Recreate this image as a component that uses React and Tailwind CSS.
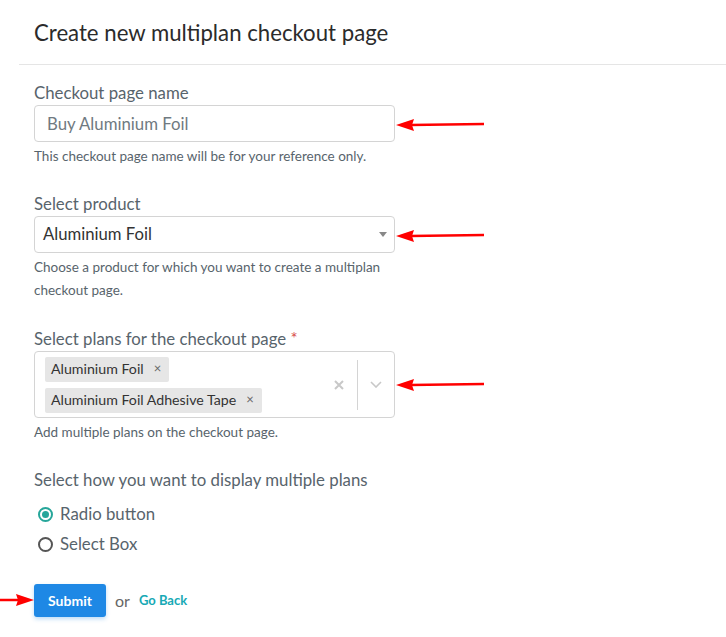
import React from "react";

const font = { fontFamily: "Lato, 'Noto Sans', sans-serif" };

function Arrow({ className }) {
  return (
    <svg className={className} viewBox="0 0 90 14" width="90" height="14">
      <line x1="14" y1="7" x2="88" y2="6" stroke="#f00" strokeWidth="2.5" />
      <polygon points="0,7 18,1 16,7 18,13" fill="#f00" />
    </svg>
  );
}

function Label({ children }) {
  return <div className="text-[16.8px] leading-[20px] text-[#58646c]">{children}</div>;
}

function Help({ children, className = "" }) {
  return <div className={`text-[13.5px] leading-[18px] text-[#58646c] ${className}`}>{children}</div>;
}

function Tag({ children }) {
  return (
    <span className="inline-flex h-[25px] items-center gap-[10px] rounded-[2px] bg-[#e6e6e6] pl-[6px] pr-[8px] text-[14.2px] text-[#333]">
      {children}
      <span className="text-[13px] text-[#666]">×</span>
    </span>
  );
}

function Radio({ checked, label }) {
  return (
    <div className="flex h-[30px] items-center gap-[7px] pl-[4px]">
      <span
        className={`flex h-[15px] w-[15px] items-center justify-center rounded-full border-2 ${
          checked ? "border-[#26a69a]" : "border-[#555]"
        }`}
      >
        {checked && <span className="h-[7px] w-[7px] rounded-full bg-[#26a69a]" />}
      </span>
      <span className="text-[16.8px] text-[#58646c]">{label}</span>
    </div>
  );
}

export default function App() {
  return (
    <div className="relative min-h-[637px] w-[726px] bg-white" style={font}>
      <div className="pl-[19px]">
        <div className="h-[65px] border-b border-[#e5e5e5] pl-[15px] pt-[19px]">
          <h1 className="text-[22.2px] leading-[28px] text-[#2b2b2b]">Create new multiplan checkout page</h1>
        </div>
      </div>

      <div className="w-[395px] pl-[34px]">
        <div className="mt-[18px]">
          <Label>Checkout page name</Label>
          <div className="mt-[2px] flex h-[37px] items-center rounded-[4px] border border-[#d4d4d4] px-[12px] text-[16.8px] text-[#707a81]">
            Buy Aluminium Foil
          </div>
          <Help className="mt-[5px]">This checkout page name will be for your reference only.</Help>
        </div>

        <div className="mt-[29px]">
          <Label>Select product</Label>
          <div className="mt-[2px] flex h-[37px] items-center justify-between rounded-[4px] border border-[#d4d4d4] pl-[8px] pr-[7px] text-[16.7px] text-[#333]">
            <span>Aluminium Foil</span>
            <svg width="8" height="5" viewBox="0 0 8 5">
              <polygon points="0,0 8,0 4,5" fill="#888" />
            </svg>
          </div>
          <Help className="mt-[3px] leading-[23px]">
            Choose a product for which you want to create a multiplan checkout page.
          </Help>
        </div>

        <div className="mt-[27px]">
          <Label>
            Select plans for the checkout page <span className="text-[#d9534f]">*</span>
          </Label>
          <div className="mt-[2px] flex h-[67px] items-center rounded-[4px] border border-[#d4d4d4]">
            <div className="flex flex-1 flex-col items-start gap-[6px] pl-[10px]">
              <Tag>Aluminium Foil</Tag>
              <Tag>Aluminium Foil Adhesive Tape</Tag>
            </div>
            <svg width="10" height="10" viewBox="0 0 10 10" className="mr-[13px]">
              <path d="M1 1 L9 9 M9 1 L1 9" stroke="#c8c8c8" strokeWidth="2" />
            </svg>
            <div className="h-[50px] w-px bg-[#d4d4d4]" />
            <svg width="12" height="7" viewBox="0 0 12 7" className="mx-[12px]">
              <path d="M1 1 L6 6 L11 1" stroke="#c8c8c8" strokeWidth="1.6" fill="none" />
            </svg>
          </div>
          <Help className="mt-[5px]">Add multiple plans on the checkout page.</Help>
        </div>

        <div className="mt-[29px]">
          <Label>Select how you want to display multiple plans</Label>
          <div className="mt-[9px]">
            <Radio checked label="Radio button" />
            <Radio label="Select Box" />
          </div>
        </div>

        <div className="mt-[25px] flex items-center">
          <button className="h-[33px] w-[72px] rounded-[3px] bg-[#1e88e5] text-[14px] font-bold text-white shadow-[0_2px_4px_rgba(30,136,229,0.3)]">
            Submit
          </button>
          <span className="ml-[9px] text-[16px] text-[#666]">or</span>
          <span className="ml-[9px] text-[13px] font-bold text-[#17a9b5]">Go Back</span>
        </div>
      </div>

      <Arrow className="absolute left-[396px] top-[118px]" />
      <Arrow className="absolute left-[396px] top-[229px]" />
      <Arrow className="absolute left-[396px] top-[378px]" />
      <svg className="absolute left-0 top-[593px]" width="34" height="14" viewBox="0 0 34 14">
        <line x1="0" y1="7" x2="20" y2="7" stroke="#f00" strokeWidth="2.5" />
        <polygon points="34,7 16,1 18,7 16,13" fill="#f00" />
      </svg>
    </div>
  );
}
